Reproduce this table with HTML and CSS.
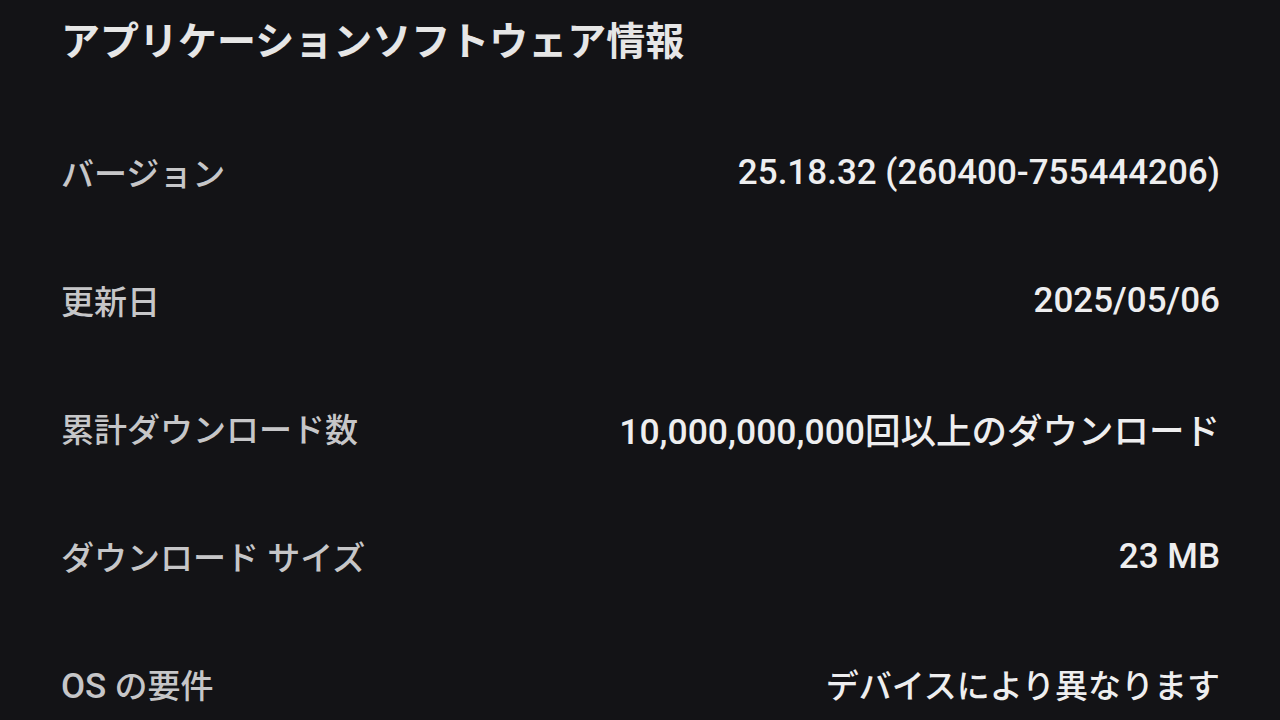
FILE: index.html
```html
<!DOCTYPE html>
<html lang="ja">
<head>
<meta charset="utf-8">
<link rel="stylesheet" href="styles.css">
</head>
<body>
<main class="page">
  <h1 class="title">アプリケーションソフトウェア情報</h1>
  <div class="rows">
    <div class="row"><span class="label">バージョン</span><span class="value"><span class="lat">25.18.32 (260400-755444206)</span></span></div>
    <div class="row"><span class="label">更新日</span><span class="value"><span class="lat">2025/05/06</span></span></div>
    <div class="row"><span class="label">累計ダウンロード数</span><span class="value wide"><span class="lat">10,000,000,000</span>回以上のダウンロード</span></div>
    <div class="row"><span class="label">ダウンロード サイズ</span><span class="value"><span class="lat">23 MB</span></span></div>
    <div class="row"><span class="label"><span class="lat">OS</span> の要件</span><span class="value">デバイスにより異なります</span></div>
  </div>
</main>
</body>
</html>
```
FILE: styles.css
```css
html, body {
  margin: 0;
  padding: 0;
  background: #131316;
  height: 100%;
  overflow: hidden;
}
.page {
  padding: 0 60px 0 61px;
  font-family: Roboto, "Noto Sans CJK JP", sans-serif;
  font-weight: 500;
}
.title {
  margin: 0;
  height: 76px;
  display: flex;
  align-items: center;
  font-size: 39px;
  font-weight: 700;
  color: #e6e6e6;
}
.rows {
  display: flex;
  flex-direction: column;
  margin-top: 32px;
}
.row {
  height: 128px;
  display: flex;
  justify-content: space-between;
  align-items: center;
  font-size: 33px;
}
.label {
  color: #c6c6c8;
}
.value {
  color: #eeeeef;
}
.lat {
  font-size: 35px;
}
.wide {
  font-size: 35.5px;
}
.wide .lat {
  font-size: 35.5px;
}
```
